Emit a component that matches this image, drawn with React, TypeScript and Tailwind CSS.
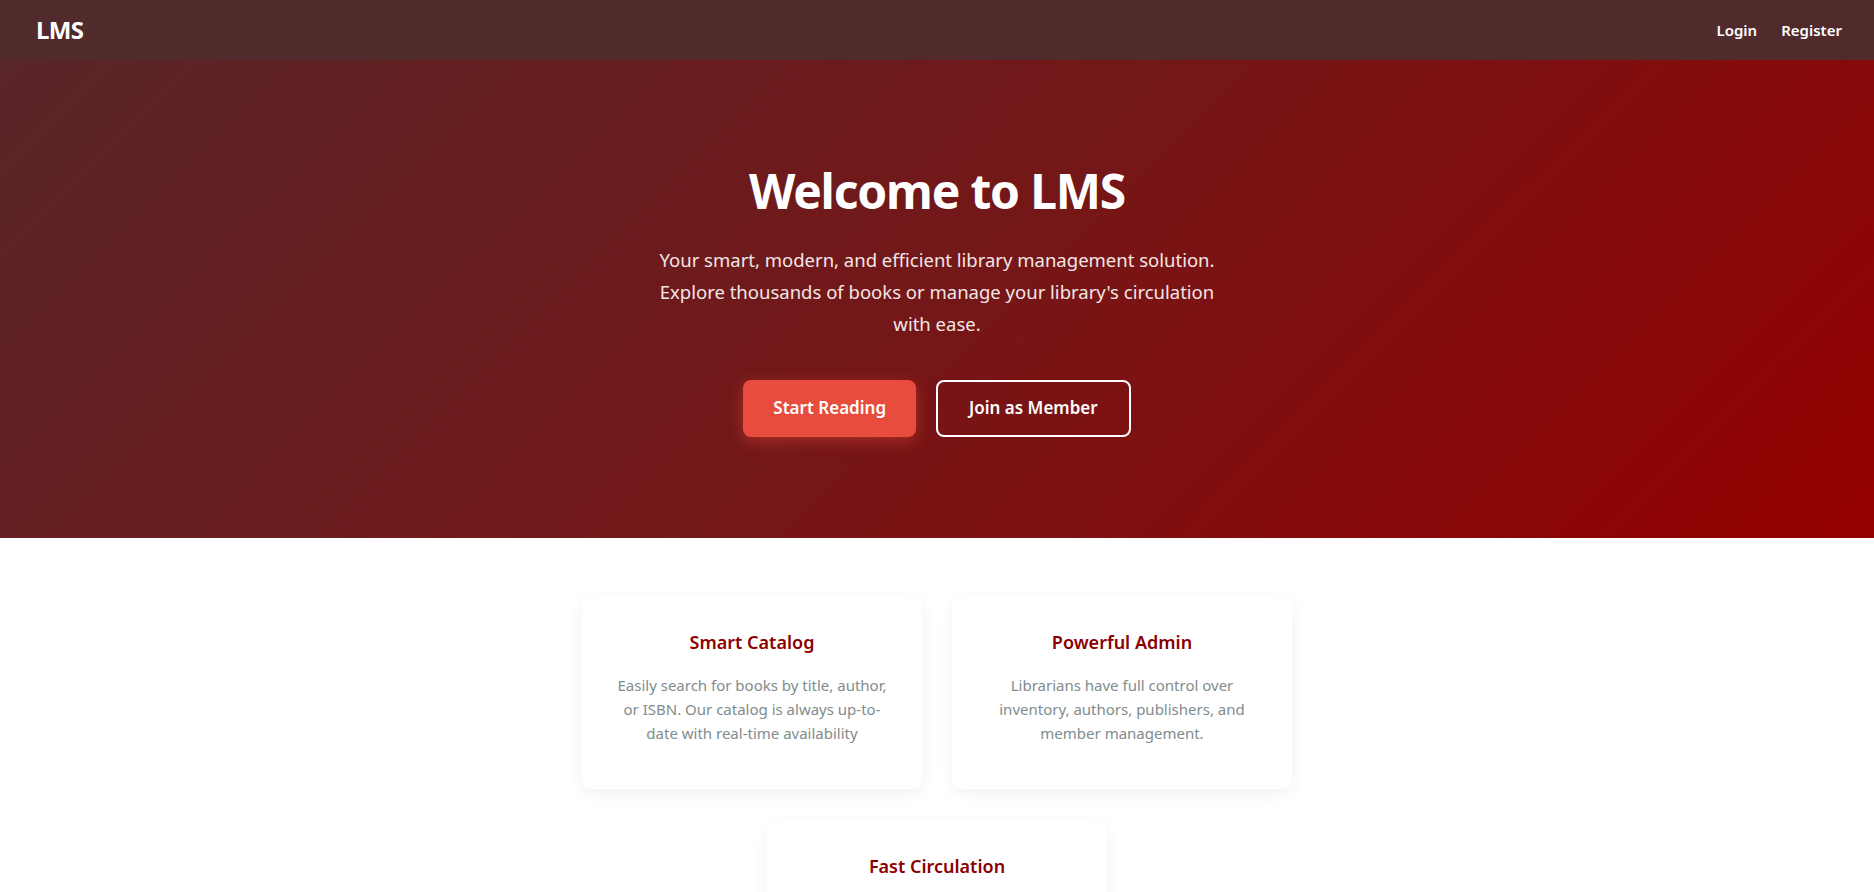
import React from 'react';

const features = [
  {
    title: 'Smart Catalog',
    text: 'Easily search for books by title, author, or ISBN. Our catalog is always up-to-date with real-time availability',
  },
  {
    title: 'Powerful Admin',
    text: 'Librarians have full control over inventory, authors, publishers, and member management.',
  },
  {
    title: 'Fast Circulation',
    text: 'Borrow and return books quickly with automated due dates and fine tracking.',
  },
];

export default function App() {
  return (
    <div className="min-h-screen bg-white font-['Noto_Sans',sans-serif]">
      <nav className="h-[60px] bg-[#512a2b] flex items-center justify-between pl-[36px] pr-[32px]">
        <span className="text-white text-[24px] font-bold tracking-tight">LMS</span>
        <div className="flex items-center gap-[24px]">
          <a className="text-white text-[15px] font-semibold">Login</a>
          <a className="text-white text-[15px] font-semibold">Register</a>
        </div>
      </nav>

      <header className="h-[478px] bg-[linear-gradient(135deg,#582528_0%,#741718_50%,#950000_100%)] flex flex-col items-center pt-[102px] text-white text-center">
        <h1 className="text-[48px] font-bold leading-[1.2] tracking-tight">Welcome to LMS</h1>
        <p className="mt-[24px] max-w-[580px] text-[18.5px] leading-[32px] text-[#f3e6e6]">
          Your smart, modern, and efficient library management solution. Explore thousands of books or manage your
          library's circulation with ease.
        </p>
        <div className="mt-[40px] flex gap-[20px]">
          <button className="h-[57px] px-[30px] rounded-[8px] bg-[#e74c3c] text-[17px] font-semibold text-white shadow-[0_4px_15px_rgba(231,76,60,0.45)]">
            Start Reading
          </button>
          <button className="h-[57px] px-[31px] rounded-[8px] border-2 border-white text-[17px] font-semibold text-white">
            Join as Member
          </button>
        </div>
      </header>

      <section className="pt-[59px] pb-[60px]">
        <div className="mx-auto max-w-[740px] flex flex-wrap justify-center gap-x-[30px] gap-y-[32px]">
          {features.map((f) => (
            <div
              key={f.title}
              className="w-[340px] bg-white rounded-[10px] shadow-[0_4px_16px_rgba(0,0,0,0.06)] px-[30px] pt-[30px] pb-[44px] text-center"
            >
              <h3 className="text-[18px] font-semibold leading-[30px] text-[#8b0000]">{f.title}</h3>
              <p className="mt-[16px] text-[15px] leading-[24px] text-[#7f8c8d]">{f.text}</p>
            </div>
          ))}
        </div>
      </section>
    </div>
  );
}
